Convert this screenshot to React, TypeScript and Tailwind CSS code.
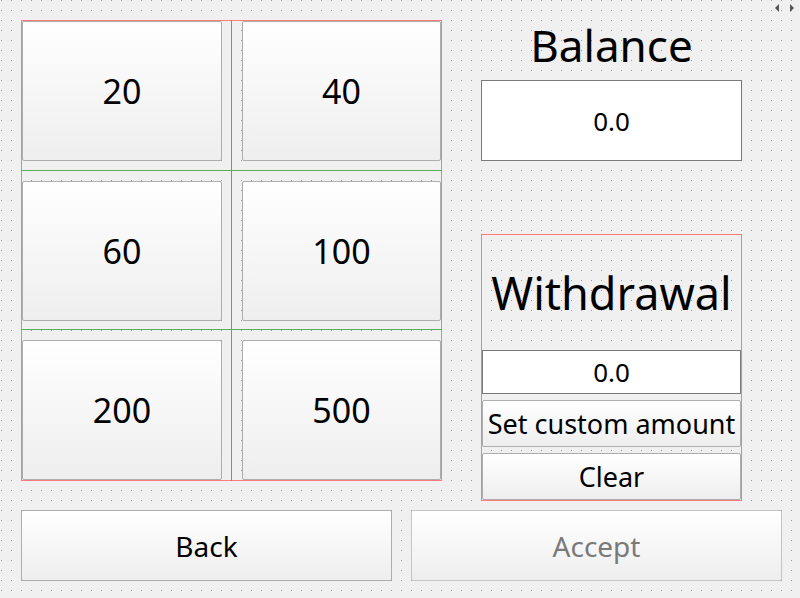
import React from 'react';

/**
 * Кнопка в стиле Qt (Windows): светлый градиент и серая рамка
 */
interface QtButtonProps {
  label: string;
  className?: string;
  textClass?: string;
  disabled?: boolean;
}

const QtButton: React.FC<QtButtonProps> = ({ label, className = '', textClass = 'text-[27px]', disabled = false }) => (
  <div
    className={`flex items-center justify-center rounded-[2px] border bg-linear-to-b from-white to-[#eeeeee] leading-none ${
      disabled ? 'border-[#c4c4c4] text-[#7a7a7a]' : 'border-[#adadad] text-black'
    } ${textClass} ${className}`}
  >
    {label}
  </div>
);

/**
 * Поле вывода суммы (белое, с тёмно-серой рамкой)
 */
const AmountField: React.FC<{ value: string; className?: string }> = ({ value, className = '' }) => (
  <div className={`flex items-center justify-center border border-[#7a7a7a] bg-white text-[26px] leading-none ${className}`}>
    {value}
  </div>
);

const rows = [
  ['20', '40'],
  ['60', '100'],
  ['200', '500'],
];

export default function App() {
  return (
    <div className="relative h-[598px] w-[800px] overflow-hidden bg-[#f0f0f0] bg-[linear-gradient(to_bottom,transparent_1px,#f0f0f0_1px),linear-gradient(to_right,#f0f0f0_1px,#9a9a9a_1px,#9a9a9a_2px,#f0f0f0_2px)] bg-[length:10px_10px] pl-[21px] pt-[20px] font-['Noto_Sans',sans-serif] text-black">
      {/* стрелки в правом верхнем углу */}
      <div className="absolute right-[6px] top-[4px] flex gap-[11px]">
        <div className="h-0 w-0 border-y-[4px] border-r-[4px] border-y-transparent border-r-[#555]" />
        <div className="h-0 w-0 border-y-[4px] border-l-[4px] border-y-transparent border-l-[#555]" />
      </div>

      <div className="flex h-[481px] items-start">
        {/* сетка кнопок с суммами */}
        <div className="relative flex h-[461px] w-[421px] flex-col border border-[#ff7b7b]">
          {rows.map((row, i) => (
            <div key={i} className={`flex h-[140px] gap-[20px] ${i === 1 ? 'mt-[20px]' : i === 2 ? 'mt-[19px]' : ''}`}>
              <QtButton label={row[0]} textClass="text-[34px]" className="w-[200px]" />
              <QtButton label={row[1]} textClass="text-[34px]" className="w-[199px]" />
            </div>
          ))}
          <div className="absolute left-[-1px] right-[-1px] top-[149px] h-px bg-[#5aae5a]" />
          <div className="absolute left-[-1px] right-[-1px] top-[308px] h-px bg-[#5aae5a]" />
          <div className="absolute bottom-[-1px] left-[209px] top-[-1px] w-px bg-[#5aae5a]" />
        </div>

        {/* правая колонка: баланс и снятие */}
        <div className="ml-[39px] flex w-[261px] flex-col">
          <div className="flex h-[60px] justify-center pt-[3px] text-[44px] leading-none">Balance</div>
          <AmountField value="0.0" className="h-[81px]" />

          <div className="mt-[73px] flex h-[267px] flex-col border border-[#ff7b7b]">
            <div className="flex h-[115px] items-center justify-center text-[45px] leading-none">Withdrawal</div>
            <AmountField value="0.0" className="h-[44px]" />
            <QtButton label="Set custom amount" className="mt-[6px] h-[47px]" />
            <QtButton label="Clear" className="mt-[6px] h-[47px]" />
          </div>
        </div>
      </div>

      {/* нижний ряд */}
      <div className="mt-[9px] flex gap-[19px]">
        <QtButton label="Back" textClass="text-[28px]" className="h-[71px] w-[371px]" />
        <QtButton label="Accept" textClass="text-[28px]" className="h-[71px] w-[371px]" disabled />
      </div>
    </div>
  );
}
